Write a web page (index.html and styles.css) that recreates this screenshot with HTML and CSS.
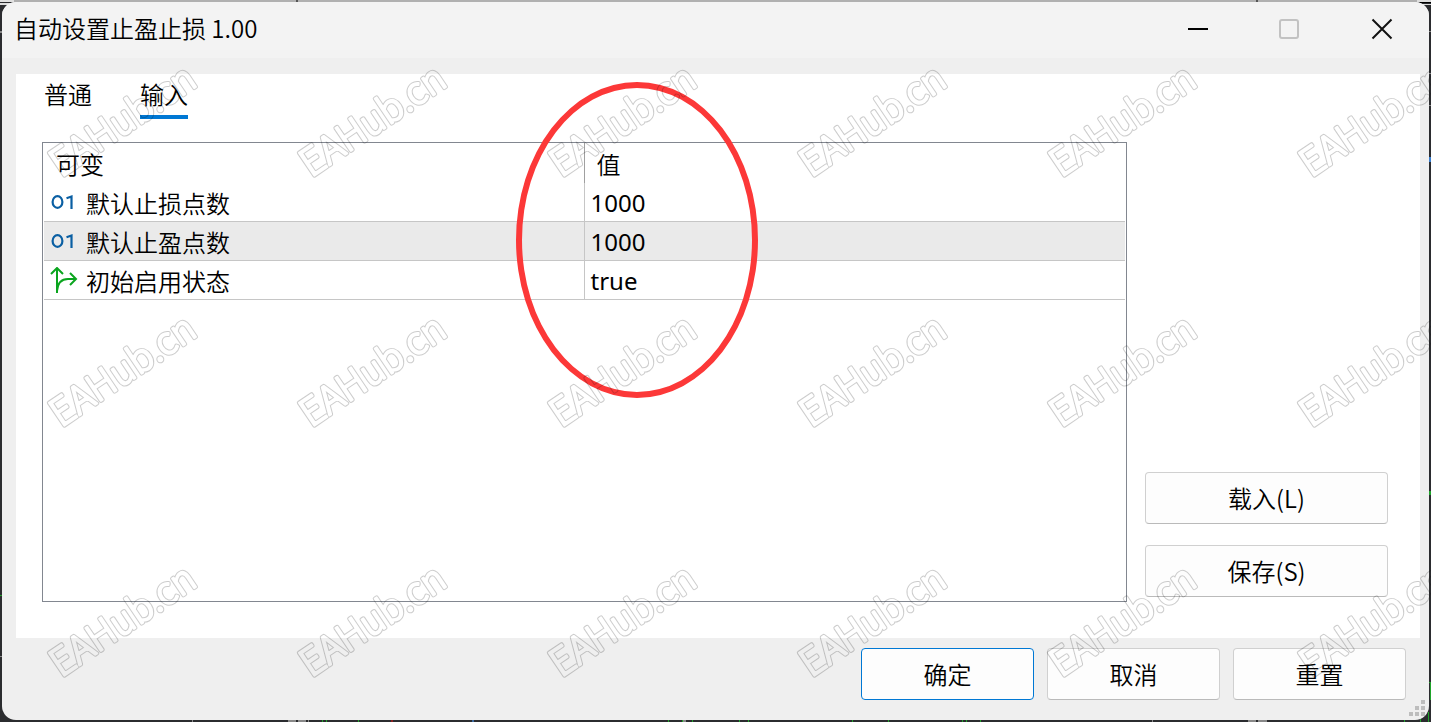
FILE: index.html
```html
<!DOCTYPE html>
<html lang="zh-CN">
<head>
<meta charset="utf-8">
<title>自动设置止盈止损 1.00</title>
<link rel="stylesheet" href="styles.css">
</head>
<body>
<svg class="backdrop" aria-hidden="true">
  <rect width="100%" height="2" fill="#b0b0b0"/>
  <rect width="14" height="2" fill="#e0e0e0"/><rect y="3" width="14" height="2" fill="#ddd"/>
  <rect x="296" width="2" height="2" fill="#555"/><rect x="1256" width="2" height="2" fill="#555"/>
  <rect x="1417" width="14" height="2" fill="#ddd"/><rect x="1419" y="2" width="12" height="1" fill="#000"/><rect x="1421" y="4" width="10" height="1" fill="#ddd"/>
  <g fill="#888">
    <rect y="31" width="2" height="2"/><rect x="1429" y="31" width="2" height="1"/><rect x="1429" y="73" width="2" height="1"/><rect x="1429" y="105" width="2" height="1"/>
    <rect y="656" width="2" height="1"/><rect x="192" y="720" width="1" height="2"/><rect x="288" y="720" width="8" height="2"/><rect x="298" y="720" width="8" height="2"/><rect x="308" y="720" width="1" height="2"/>
    <rect x="683" y="720" width="3" height="2"/><rect x="1152" y="720" width="1" height="2"/><rect x="1248" y="720" width="8" height="2"/><rect x="1258" y="720" width="9" height="2"/>
  </g>
  <g fill="#1fa32a">
    <rect y="595" width="2" height="1"/><rect x="322" y="720" width="1" height="2"/><rect x="326" y="720" width="1" height="2"/><rect x="358" y="720" width="1" height="2"/>
    <rect x="668" y="720" width="1" height="2"/><rect x="682" y="720" width="1" height="2"/><rect x="692" y="720" width="1" height="2"/><rect x="739" y="720" width="1" height="2"/><rect x="748" y="720" width="1" height="2"/>
    <rect x="852" y="720" width="1" height="2"/><rect x="888" y="720" width="1" height="2"/><rect x="962" y="720" width="1" height="2"/><rect x="966" y="720" width="1" height="2"/><rect x="980" y="720" width="1" height="2"/>
    <rect x="1429" y="491" width="2" height="4"/><rect x="1428" y="682" width="3" height="1"/><rect x="1430" y="682" width="1" height="18"/><rect x="1404" y="720" width="1" height="2"/><rect x="1420" y="719" width="1" height="3"/><rect x="1428" y="712" width="1" height="10"/>
  </g>
  <rect x="1429" y="157" width="2" height="5" fill="#3b7fd0"/><rect x="391" y="720" width="2" height="2" fill="#8a2020"/><rect x="472" y="720" width="2" height="2" fill="#3b6aa0"/>
</svg>

<main class="window">
  <header class="titlebar">
    <h1 class="title">自动设置止盈止损 1.00</h1>
    <div class="controls">
      <button class="control" aria-label="最小化"><svg width="22" height="22" viewBox="0 0 22 22"><path d="M1 11H21" stroke="#000" stroke-width="2"/></svg></button>
      <button class="control" aria-label="最大化" disabled><svg width="22" height="22" viewBox="0 0 22 22"><rect x="1" y="2" width="18" height="18" rx="2" fill="none" stroke="#c2c2c2" stroke-width="2"/></svg></button>
      <button class="control" aria-label="关闭"><svg width="22" height="22" viewBox="0 0 22 22"><path d="M1.500 1.500L20.500 20.500M20.500 1.500L1.500 20.500" stroke="#111" stroke-width="2"/></svg></button>
    </div>
  </header>

  <section class="panel">
    <nav class="tabs" role="tablist">
      <button class="tab" role="tab" aria-selected="false">普通</button>
      <button class="tab tab-active" role="tab" aria-selected="true">输入</button>
    </nav>
    <div class="content">
      <div class="list">
        <table class="params">
          <thead><tr><th>可变</th><th>值</th></tr></thead>
          <tbody>
            <tr><td><div class="name"><svg class="icon" width="28" height="28" viewBox="0 0 28 28"><g fill="none" stroke="#0a5fa3" stroke-width="2.200"><ellipse cx="7.500" cy="13" rx="4.900" ry="5.900"/><path d="M16.500 9.200L21.500 7.500V19.900"/></g></svg>默认止损点数</div></td><td>1000</td></tr>
            <tr class="selected"><td><div class="name"><svg class="icon" width="28" height="28" viewBox="0 0 28 28"><g fill="none" stroke="#0a5fa3" stroke-width="2.200"><ellipse cx="7.500" cy="13" rx="4.900" ry="5.900"/><path d="M16.500 9.200L21.500 7.500V19.900"/></g></svg>默认止盈点数</div></td><td>1000</td></tr>
            <tr><td><div class="name"><svg class="icon" width="28" height="28" viewBox="0 0 28 28"><path d="M7 26V1M1 7L7 1L13 7M7 24Q8 12 18 12H26M20 6L26 12L20 18" fill="none" stroke="#0aa51e" stroke-width="2"/></svg>初始启用状态</div></td><td>true</td></tr>
          </tbody>
        </table>
      </div>
      <div class="side">
        <button class="btn">载入(L)</button>
        <button class="btn">保存(S)</button>
      </div>
    </div>
  </section>

  <footer class="footer">
    <button class="btn btn-default">确定</button>
    <button class="btn">取消</button>
    <button class="btn">重置</button>
    <svg class="grip" width="16" height="16" viewBox="0 0 16 16" fill="#bdbdbd"><path d="M12 0h4v4h-4zM6 6h4v4h-4zM12 6h4v4h-4zM0 12h4v4h-4zM6 12h4v4h-4zM12 12h4v4h-4z"/></svg>
  </footer>
</main>

<div class="highlight"></div>

<svg class="watermark" aria-hidden="true">
  <defs>
    <mask id="ring" maskUnits="userSpaceOnUse" x="0" y="0" width="250" height="250">
      <rect width="250" height="250" fill="#fff"/>
      <text class="mark" transform="translate(61 178) rotate(-34)" fill="#000" stroke="#000" stroke-width="2">EAHub.cn</text>
    </mask>
    <pattern id="outlined" width="250" height="250" patternUnits="userSpaceOnUse">
      <g mask="url(#ring)"><text class="mark" transform="translate(61 178) rotate(-34)" fill="#000" stroke="#000" stroke-width="4">EAHub.cn</text></g>
    </pattern>
  </defs>
  <rect width="100%" height="100%" fill="url(#outlined)" opacity="0.200"/>
</svg>
</body>
</html>
```
FILE: styles.css
```css
* { box-sizing: border-box; }

body {
  margin: 0;
  min-height: 100vh;
  padding: 2px;
  display: flex;
  background: #2b2c2f;
  color: #000;
  font: 24px/32px "Noto Sans CJK SC", sans-serif;
  font-weight: 350;
}

button {
  font: inherit;
  color: inherit;
  padding: 0;
  border: 0;
  background: none;
}

.backdrop {
  position: absolute;
  inset: 0;
  width: 100%;
  height: 100%;
}

.window {
  position: relative;
  flex: 1;
  display: flex;
  flex-direction: column;
  overflow: hidden;
  border-radius: 14px;
  background: #efefef;
}

.titlebar {
  display: flex;
  justify-content: space-between;
  height: 56px;
  padding: 0 1px 0 12px;
  background: #f3f3f3;
}

.title {
  margin: 0;
  padding-top: 10px;
  font-size: 24px;
  font-weight: 350;
}

.controls { display: flex; }

.control {
  width: 92px;
  height: 54px;
  display: grid;
  place-items: center;
}

.panel {
  flex: 1;
  display: flex;
  flex-direction: column;
  margin: 16px 9px 0 14px;
  padding: 4px 32px 36px 26px;
  background: #fff;
}

.tabs {
  display: flex;
  gap: 48px;
  padding-left: 2px;
}

.tab {
  height: 41px;
  padding-bottom: 6px;
  border-bottom: 4px solid transparent;
}

.tab-active { border-color: #0078d4; }

.content {
  flex: 1;
  display: flex;
  gap: 18px;
  margin-top: 23px;
}

.list {
  flex: 1;
  padding: 0 1px;
  border: 1px solid #828790;
}

.params {
  width: 100%;
  table-layout: fixed;
  border-collapse: separate;
  border-spacing: 0;
}

.params th {
  height: 40px;
  padding: 2px 12px 0;
  text-align: left;
  font-weight: 350;
}

.params th:first-child { width: 50%; }

.params td {
  height: 39px;
  padding: 2px 6px 0;
  border-bottom: 1px solid #c6c6c6;
}

.params tr > :first-child { border-right: 1px solid #c6c6c6; }
.params th:first-child { border-right-color: #a0a0a0; }
.params td:last-child { font-family: "Noto Sans", sans-serif; font-weight: 400; }
.selected { background: #eaeaea; }

.name {
  display: flex;
  align-items: center;
  gap: 8px;
}

.side {
  width: 243px;
  display: flex;
  flex-direction: column;
  justify-content: flex-end;
  gap: 21px;
  padding-bottom: 5px;
}

.btn {
  height: 52px;
  padding: 0;
  border: 1px solid #d0d0d0;
  border-bottom-color: #bababa;
  border-radius: 4px;
  background: #fdfdfd;
}

.footer {
  display: flex;
  justify-content: flex-end;
  gap: 13px;
  padding: 10px 23px 20px;
}

.footer .btn { width: 173px; }
.footer .btn-default { border-color: #0078d4; }

.grip {
  position: absolute;
  right: 4px;
  bottom: 4px;
}

.highlight {
  position: absolute;
  left: 516px;
  top: 82px;
  width: 242px;
  height: 316px;
  border: 6px solid #fc3838;
  border-radius: 50%;
  pointer-events: none;
}

.watermark {
  position: absolute;
  inset: 0;
  width: 100%;
  height: 100%;
  pointer-events: none;
}

.mark {
  font: 300 38px "Noto Sans CJK SC", sans-serif;
  stroke-linejoin: round;
}
```
